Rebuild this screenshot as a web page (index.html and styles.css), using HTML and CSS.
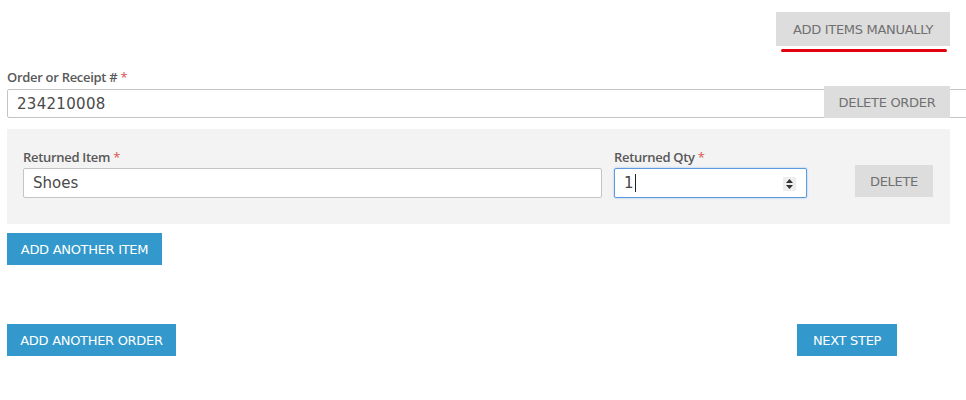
FILE: index.html
```html
<!DOCTYPE html>
<html>
<head>
<meta charset="utf-8">
<link rel="stylesheet" href="styles.css">
</head>
<body>
<div class="page">
  <div class="topbar">
    <div class="manual">
      <button class="btn btn-gray btn-manual">ADD ITEMS MANUALLY</button>
      <div class="underline"></div>
    </div>
  </div>

  <label class="label">Order or Receipt # <span class="req">*</span></label>
  <div class="order-field">
    <input class="input input-order" type="text" value="234210008">
    <button class="btn btn-gray btn-delete-order">DELETE ORDER</button>
  </div>

  <div class="item-panel">
    <div class="field field-item">
      <label class="label">Returned Item <span class="req">*</span></label>
      <input class="input" type="text" value="Shoes">
    </div>
    <div class="field field-qty">
      <label class="label">Returned Qty <span class="req">*</span></label>
      <div class="input input-qty">
        <span class="qty-val">1</span><span class="caret"></span>
        <span class="spinner">
          <svg width="9" height="12" viewBox="0 0 9 12"><path d="M4.5 1 L8 5 L1 5 Z" fill="#333"/><path d="M1 7 L8 7 L4.5 11 Z" fill="#333"/></svg>
        </span>
      </div>
    </div>
    <button class="btn btn-gray btn-delete">DELETE</button>
  </div>

  <button class="btn btn-blue btn-add-item">ADD ANOTHER ITEM</button>

  <div class="footer">
    <button class="btn btn-blue">ADD ANOTHER ORDER</button>
    <button class="btn btn-blue btn-next">NEXT STEP</button>
  </div>
</div>
</body>
</html>
```

FILE: styles.css
```css
* { box-sizing: border-box; }
html, body { margin: 0; padding: 0; background: #fff; overflow: hidden; }
body { font-family: "Open Sans", "DejaVu Sans", sans-serif; }

.page {
  padding: 12px 16px 0 7px;
}

.topbar {
  display: flex;
  justify-content: flex-end;
}
.manual {
  display: flex;
  flex-direction: column;
  align-items: stretch;
  width: 174px;
}
.underline {
  height: 3px;
  background: #e3000f;
  border-radius: 2px;
  margin: 3px 3px 0 5px;
}

.btn {
  border: none;
  font-family: "DejaVu Sans", sans-serif;
  font-size: 13px;
  letter-spacing: -0.3px;
  padding: 0 14px;
  height: 32px;
  cursor: pointer;
  white-space: nowrap;
}
.btn-gray { background: #dddddd; color: #707070; }
.btn-blue { background: #3399cc; color: #fff; }
.btn-manual { height: 34px; width: 100%; padding: 0; }

.label {
  display: block;
  font-family: "Open Sans", sans-serif;
  font-size: 13px;
  font-weight: 600;
  color: #585858;
  line-height: 16px;
  margin-bottom: 4px;
  letter-spacing: -0.3px;
}
.page > .label { margin-top: 17px; }
.req { color: #d9534f; font-weight: 400; }

.input {
  display: block;
  width: 100%;
  height: 30px;
  border: 1px solid #c4c4c4;
  border-radius: 2px;
  background: #fff;
  font-family: "DejaVu Sans", sans-serif;
  font-size: 15px;
  color: #4a4a4a;
  padding: 0 9px;
  outline: none;
}

.order-field {
  position: relative;
  margin-right: -40px;
}
.input-order { letter-spacing: 0.3px; height: 29px; }
.btn-delete-order {
  position: absolute;
  right: 40px;
  top: -3px;
  width: 126px;
  padding: 0;
}

.item-panel {
  display: flex;
  align-items: flex-end;
  background: #f3f3f3;
  margin-top: 11px;
  padding: 20px 17px 26px 16px;
}
.field-item { flex: 1; }
.field-item .label { margin-bottom: 3px; }
.field-qty { width: 193px; margin-left: 12px; }
.field-qty .label { margin-bottom: 3px; }
.input-qty {
  display: flex;
  align-items: center;
  border-color: #5d9be0;
  box-shadow: 0 0 2px rgba(80, 150, 230, 0.6);
  position: relative;
}
.qty-val { color: #444; }
.caret {
  width: 1px;
  height: 18px;
  background: #222;
  margin-left: 1px;
}
.spinner {
  position: absolute;
  right: 10px;
  top: 8px;
  width: 13px;
  height: 14px;
  background: #eee;
  display: flex;
  align-items: center;
  justify-content: center;
}
.btn-delete {
  margin-left: 48px;
  width: 78px;
  padding: 0;
  margin-bottom: 1px;
}

.btn-add-item {
  display: block;
  margin-top: 9px;
  width: 155px;
  padding: 0;
}

.footer {
  display: flex;
  justify-content: space-between;
  margin-top: 59px;
  padding-right: 53px;
}
.footer .btn:first-child { width: 169px; padding: 0; }
.btn-next { width: 100px; padding: 0; }
```
